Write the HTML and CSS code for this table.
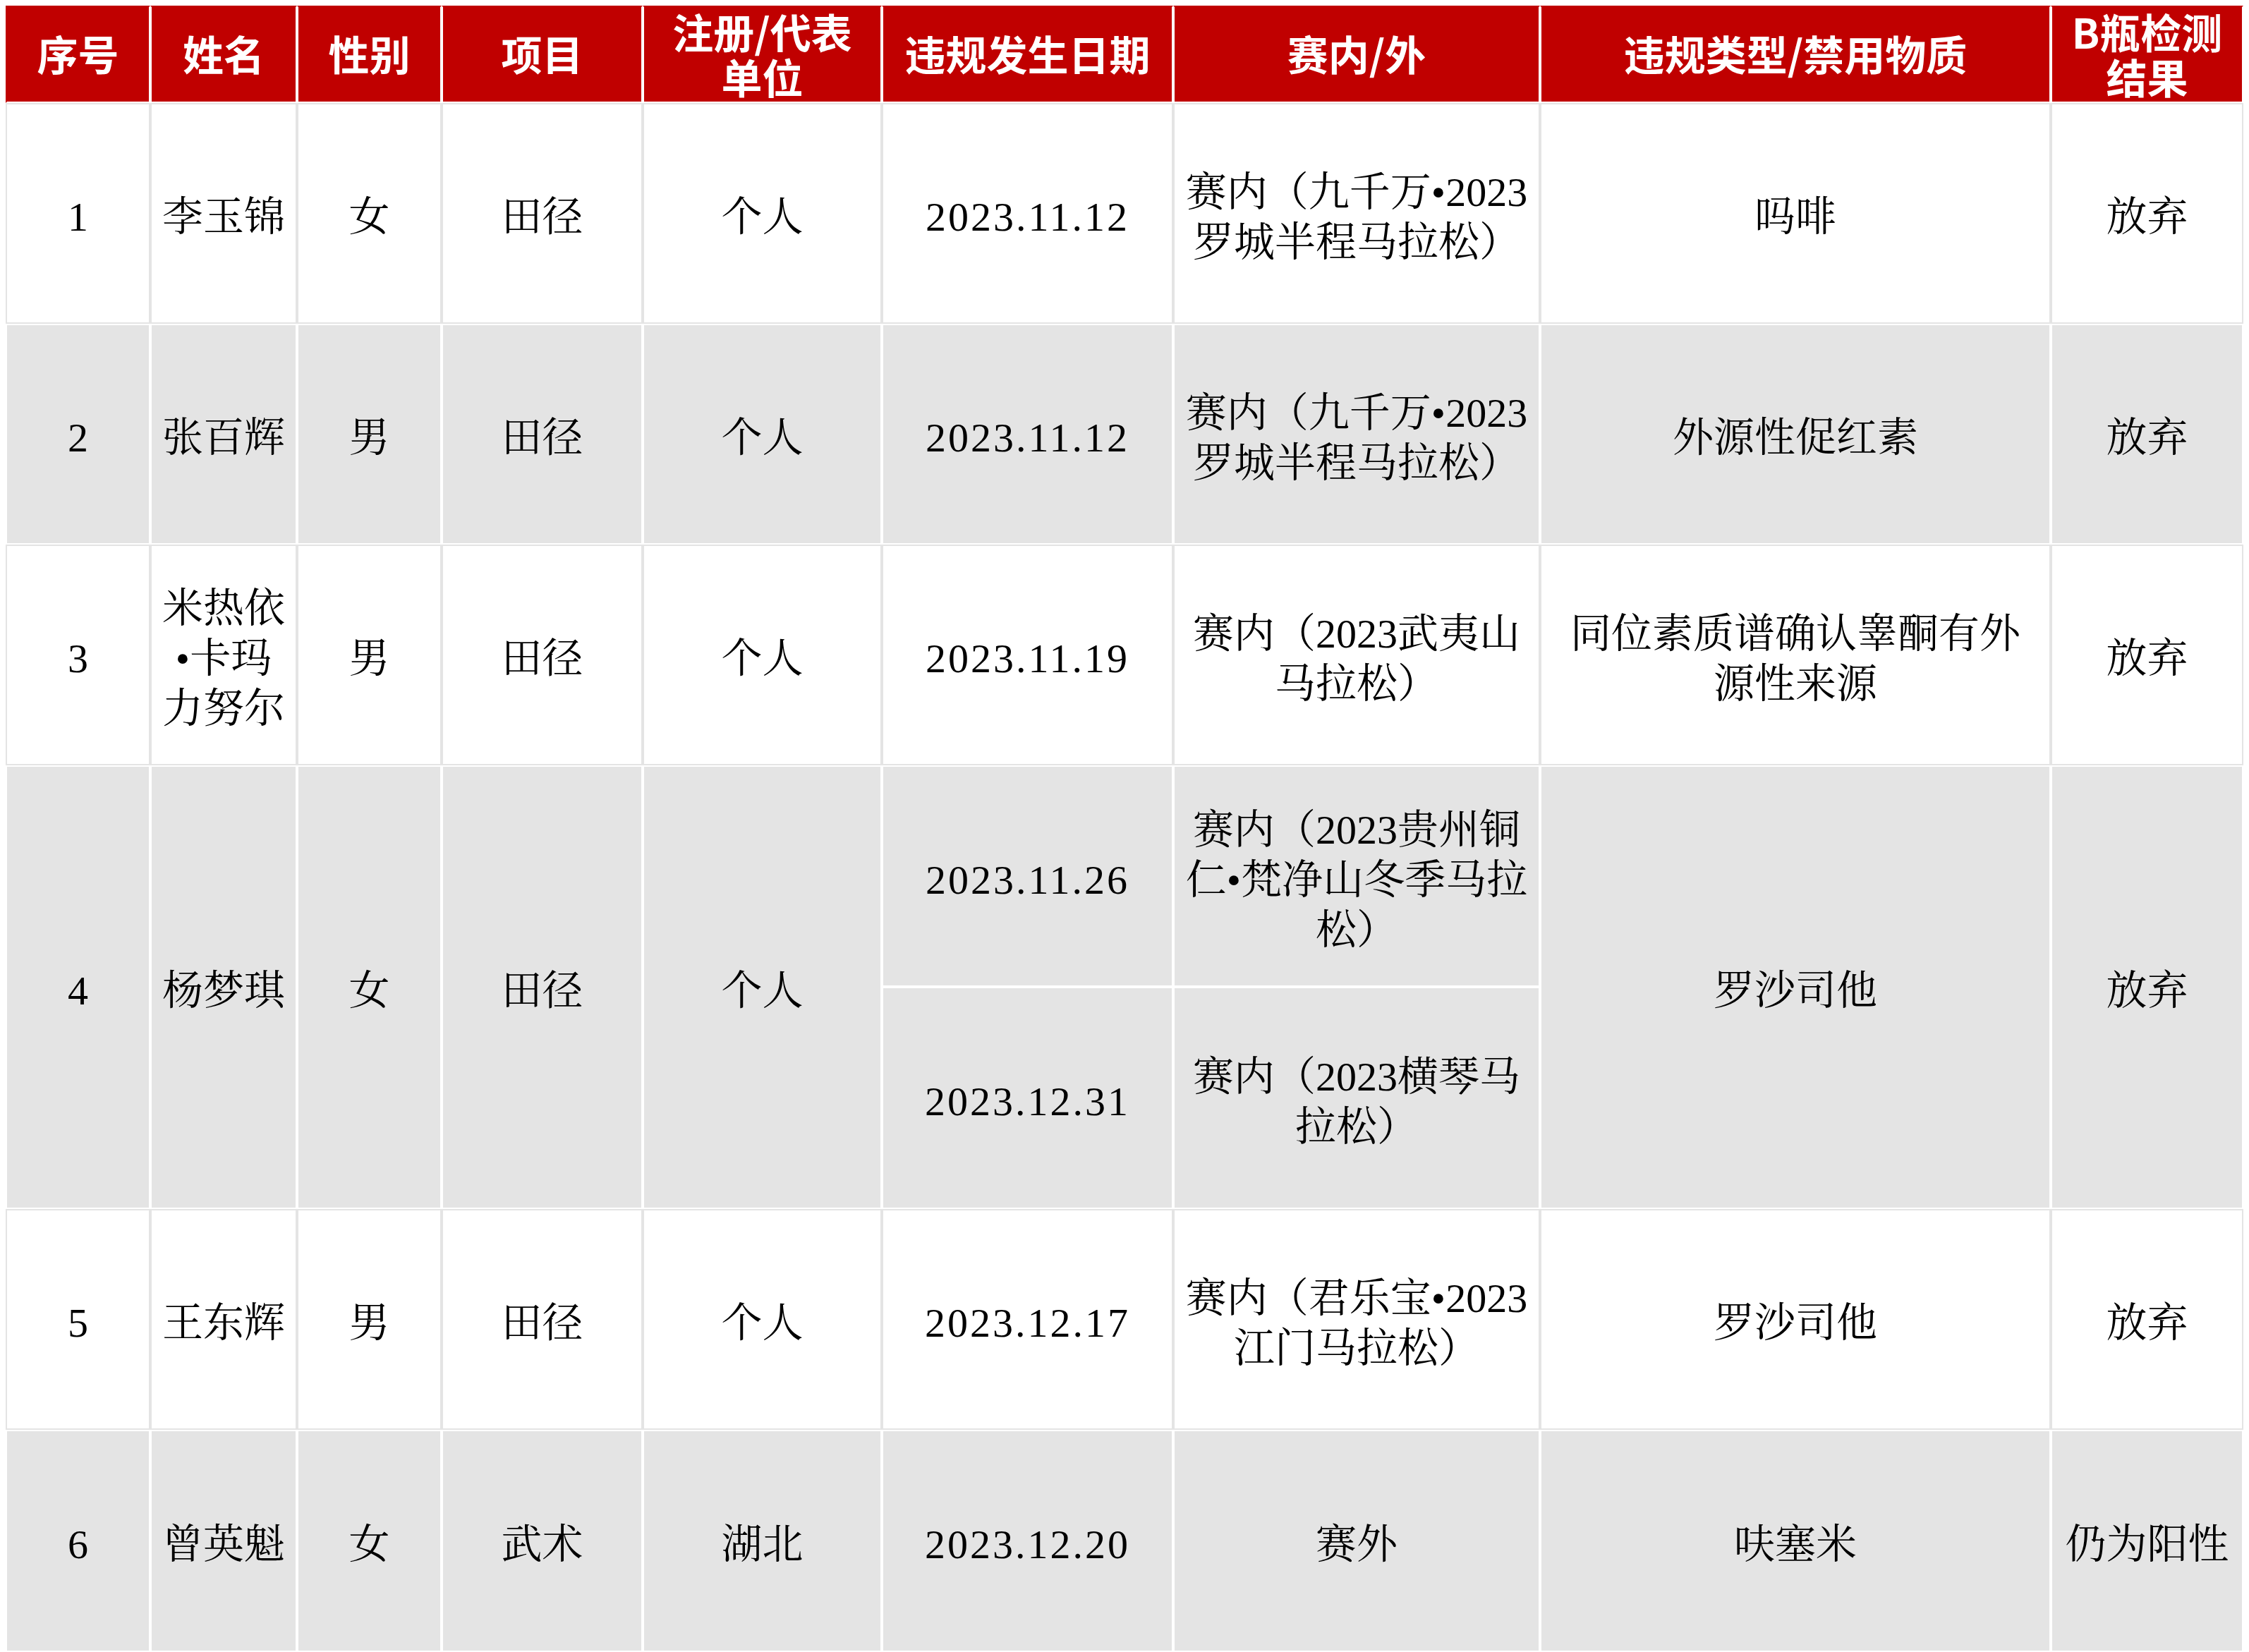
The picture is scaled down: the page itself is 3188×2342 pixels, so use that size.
FILE: index.html
```html
<!DOCTYPE html>
<html lang="zh-CN">
<head>
<meta charset="utf-8">
<title>违规名单</title>
<link rel="stylesheet" href="styles.css">
</head>
<body>
<table class="sheet">
  <colgroup>
    <col class="c-no">
    <col class="c-name">
    <col class="c-sex">
    <col class="c-item">
    <col class="c-unit">
    <col class="c-date">
    <col class="c-comp">
    <col class="c-type">
    <col class="c-b">
  </colgroup>
  <thead>
    <tr class="head">
      <th><div class="hcell">序号</div></th>
      <th><div class="hcell">姓名</div></th>
      <th><div class="hcell">性别</div></th>
      <th><div class="hcell">项目</div></th>
      <th><div class="hcell two">注册/代表<br>单位</div></th>
      <th><div class="hcell">违规发生日期</div></th>
      <th><div class="hcell">赛内/外</div></th>
      <th><div class="hcell">违规类型/禁用物质</div></th>
      <th><div class="hcell two">B瓶检测<br>结果</div></th>
    </tr>
  </thead>
  <tbody>
    <tr class="light r313">
      <td>1</td>
      <td>李玉锦</td>
      <td>女</td>
      <td>田径</td>
      <td>个人</td>
      <td class="date">2023.11.12</td>
      <td>赛内（九千万•2023<br>罗城半程马拉松）</td>
      <td>吗啡</td>
      <td>放弃</td>
    </tr>
    <tr class="shade r313">
      <td>2</td>
      <td>张百辉</td>
      <td>男</td>
      <td>田径</td>
      <td>个人</td>
      <td class="date">2023.11.12</td>
      <td>赛内（九千万•2023<br>罗城半程马拉松）</td>
      <td>外源性促红素</td>
      <td>放弃</td>
    </tr>
    <tr class="light r313">
      <td>3</td>
      <td>米热依<br>•卡玛<br>力努尔</td>
      <td>男</td>
      <td>田径</td>
      <td>个人</td>
      <td class="date">2023.11.19</td>
      <td>赛内（2023武夷山<br>马拉松）</td>
      <td>同位素质谱确认睾酮有外<br>源性来源</td>
      <td>放弃</td>
    </tr>
    <tr class="shade r314">
      <td rowspan="2">4</td>
      <td rowspan="2">杨梦琪</td>
      <td rowspan="2">女</td>
      <td rowspan="2">田径</td>
      <td rowspan="2">个人</td>
      <td class="date">2023.11.26</td>
      <td>赛内（2023贵州铜<br>仁•梵净山冬季马拉<br>松）</td>
      <td rowspan="2">罗沙司他</td>
      <td rowspan="2">放弃</td>
    </tr>
    <tr class="shade r315">
      <td class="date">2023.12.31</td>
      <td>赛内（2023横琴马<br>拉松）</td>
    </tr>
    <tr class="light r313">
      <td>5</td>
      <td>王东辉</td>
      <td>男</td>
      <td>田径</td>
      <td>个人</td>
      <td class="date">2023.12.17</td>
      <td>赛内（君乐宝•2023<br>江门马拉松）</td>
      <td>罗沙司他</td>
      <td>放弃</td>
    </tr>
    <tr class="shade r315">
      <td>6</td>
      <td>曾英魁</td>
      <td>女</td>
      <td>武术</td>
      <td>湖北</td>
      <td class="date">2023.12.20</td>
      <td>赛外</td>
      <td>呋塞米</td>
      <td>仍为阳性</td>
    </tr>
  </tbody>
</table>
</body>
</html>
```

FILE: styles.css
```css
html, body {
  background: #ffffff;
}

body {
  margin: 8px;
}

.sheet {
  width: 3172px;
  table-layout: fixed;
  border-collapse: separate;
  border-spacing: 0;
  font-family: "Liberation Serif", "Noto Serif CJK SC", "Noto Sans CJK SC", serif;
  font-size: 58px;
  line-height: 71px;
  color: #000000;
}

.c-no { width: 205px; }
.c-name { width: 208px; }
.c-sex { width: 205px; }
.c-item { width: 285px; }
.c-unit { width: 339px; }
.c-date { width: 413px; }
.c-comp { width: 520px; }
.c-type { width: 724px; }
.c-b { width: 273px; }

.head th {
  height: 134px;
  padding: 0;
  background: #c00000;
  border: 2px solid #ffffff;
  border-top-color: #c00000;
  color: #ffffff;
  font-family: "Noto Sans CJK SC", sans-serif;
  font-weight: 700;
  font-size: 58px;
  line-height: 70px;
  vertical-align: top;
}

.head th:first-child {
  border-left-color: #c00000;
}

.hcell {
  height: 130px;
  display: flex;
  align-items: center;
  justify-content: center;
  text-align: center;
}

.hcell.two {
  line-height: 64px;
  padding-top: 2px;
  box-sizing: border-box;
}

tbody td {
  padding: 10px 4px 0;
  text-align: center;
  vertical-align: middle;
  font-weight: 400;
}

.light td {
  background: #ffffff;
  border: 2px solid #e4e4e4;
}

.shade td {
  background: #e4e4e4;
  border: 2px solid #ffffff;
}

.r313 { height: 313px; }
.r314 { height: 314px; }
.r315 { height: 315px; }

.date {
  letter-spacing: 3px;
}
```
